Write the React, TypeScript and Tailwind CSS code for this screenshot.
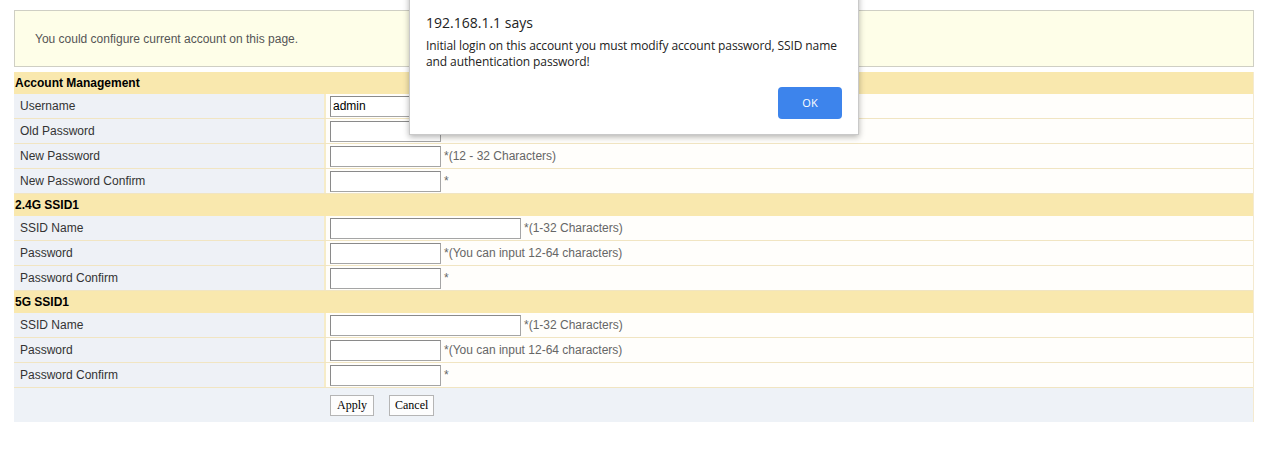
import React from 'react';

type Field = { label: string; value?: string; wide?: boolean; hint?: string };
type Section = { title: string; fields: Field[] };

const SECTIONS: Section[] = [
  {
    title: 'Account Management',
    fields: [
      { label: 'Username', value: 'admin' },
      { label: 'Old Password' },
      { label: 'New Password', hint: '*(12 - 32 Characters)' },
      { label: 'New Password Confirm', hint: '*' },
    ],
  },
  {
    title: '2.4G SSID1',
    fields: [
      { label: 'SSID Name', wide: true, hint: '*(1-32 Characters)' },
      { label: 'Password', hint: '*(You can input 12-64 characters)' },
      { label: 'Password Confirm', hint: '*' },
    ],
  },
  {
    title: '5G SSID1',
    fields: [
      { label: 'SSID Name', wide: true, hint: '*(1-32 Characters)' },
      { label: 'Password', hint: '*(You can input 12-64 characters)' },
      { label: 'Password Confirm', hint: '*' },
    ],
  },
];

const Row: React.FC<{ field: Field }> = ({ field }) => (
  <div className="flex h-[25px] border-b border-[#f1e5c2]">
    <div className="w-[310px] bg-[#eef1f6] pl-[6px] flex items-center text-[12px] text-[#333]">{field.label}</div>
    <div className="w-[2px] bg-[#f6ecc8]" />
    <div className="flex-1 bg-[#fffefb] flex items-center pl-[4px]">
      <input
        defaultValue={field.value}
        className={`${field.wide ? 'w-[191px]' : 'w-[111px]'} h-[21px] border border-[#a5a5a5] border-t-[#8a8a8a] border-l-[#8a8a8a] bg-white px-[2px] text-[12px] text-black outline-none`}
      />
      {field.hint && <span className="ml-[3px] text-[12px] text-[#666]">{field.hint}</span>}
    </div>
  </div>
);

export default function App() {
  return (
    <div className="relative w-[1270px] h-[461px] bg-white overflow-hidden font-['Liberation_Sans',Arial,sans-serif]">
      <div className="ml-[14px] mt-[10px] w-[1240px]">
        <div className="h-[57px] border border-[#cfcfc4] bg-[#fefee8] flex items-center pl-[20px] text-[12px] text-[#555]">
          You could configure current account on this page.
        </div>

        <div className="mt-[5px] border-r border-[#f4ead0]">
          {SECTIONS.map(s => (
            <div key={s.title}>
              <div className="h-[22px] bg-[#f9e8ae] flex items-center pl-[1px] text-[12px] font-bold text-black">{s.title}</div>
              {s.fields.map((f, i) => <Row key={i} field={f} />)}
            </div>
          ))}
          <div className="h-[34px] bg-[#eef2f7] flex items-center pl-[316px] gap-[15px] font-['Liberation_Serif',serif] text-[12px] text-black">
            <button className="h-[21px] px-[6px] border border-[#b5b5b5] bg-[#fdfdfd]">Apply</button>
            <button className="h-[21px] px-[5px] border border-[#b5b5b5] bg-[#fdfdfd]">Cancel</button>
          </div>
        </div>
      </div>

      {/* browser alert box */}
      <div className="absolute left-[409px] top-[-12px] w-[450px] h-[147px] bg-white border border-[#c9c9c9] shadow-[0_2px_6px_rgba(0,0,0,0.3)] font-['Open_Sans',sans-serif] text-[#222]">
        <div className="pl-[16px] pt-[24px] text-[14px] leading-[20px]">192.168.1.1 says</div>
        <div className="pl-[16px] pr-[14px] pt-[5px] text-[12px] leading-[16px] tracking-[-0.1px]">
          Initial login on this account you must modify account password, SSID name and authentication password!
        </div>
        <div className="flex justify-end pr-[16px] pt-[17px]">
          <button className="w-[64px] h-[32px] rounded-[4px] bg-[#3d84ec] text-white text-[11px]">OK</button>
        </div>
      </div>
    </div>
  );
}
